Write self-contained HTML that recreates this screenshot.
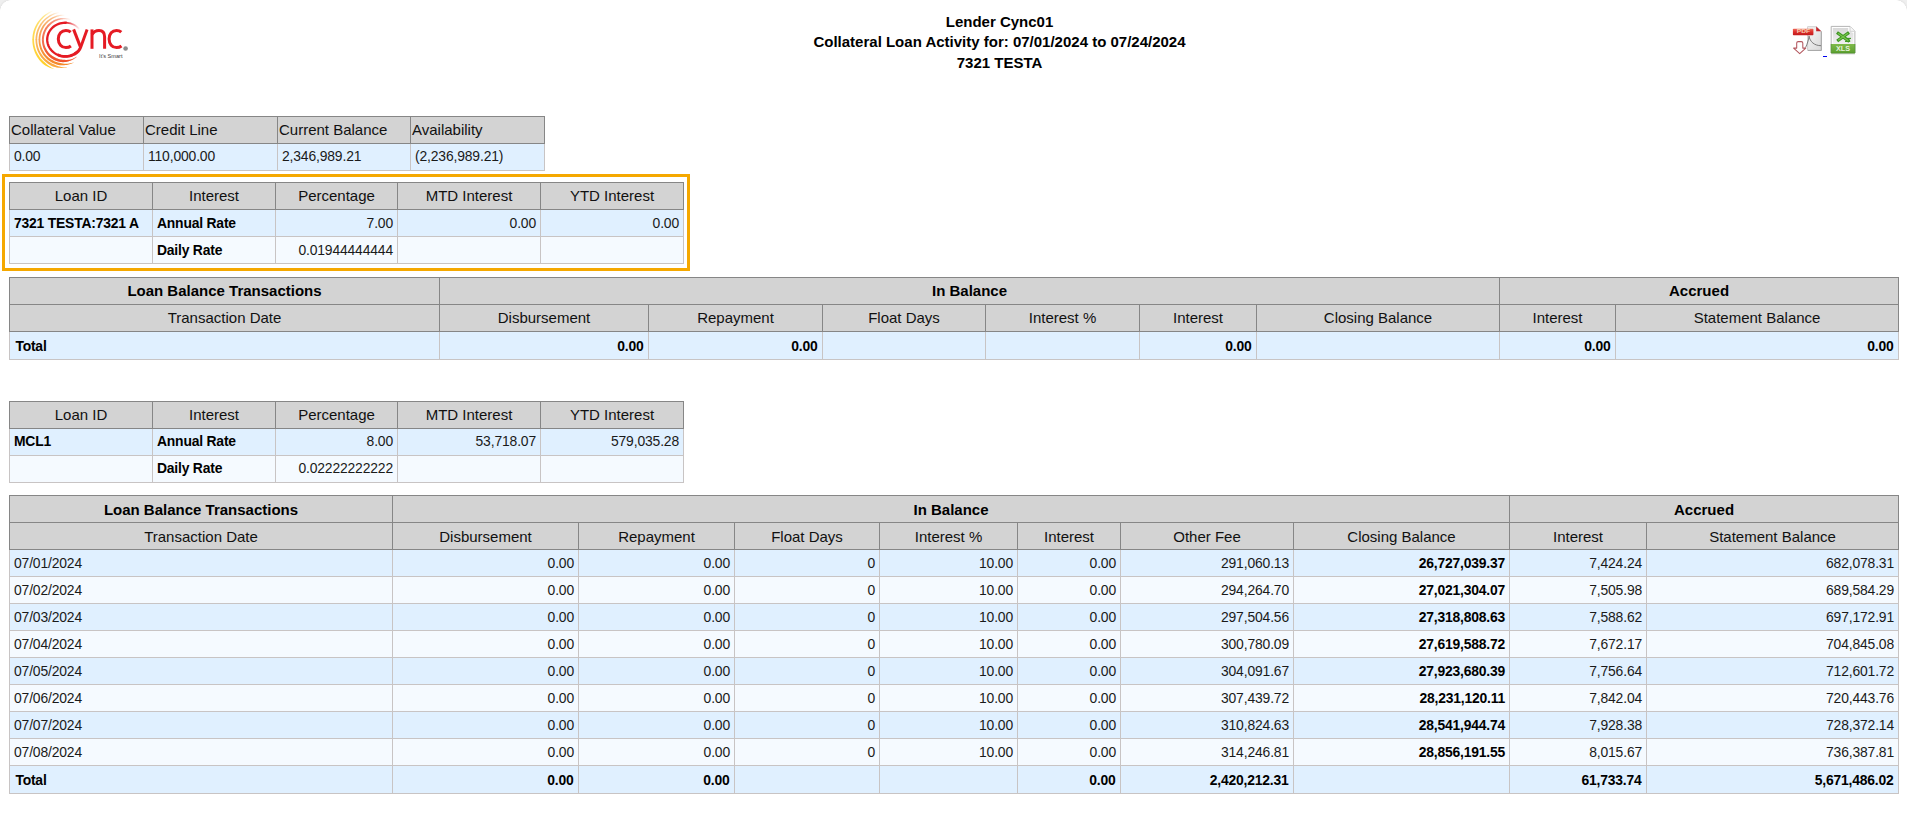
<!DOCTYPE html>
<html><head><meta charset="utf-8"><title>Collateral Loan Activity</title>
<style>
html,body{margin:0;padding:0;background:#fff;}
body{width:1907px;height:822px;position:relative;overflow:hidden;font-family:"Liberation Sans",sans-serif;color:#000;}
.t{position:absolute;border-collapse:collapse;table-layout:fixed;font-size:13.9px;}
.t th,.t td{box-sizing:border-box;padding:0 4px 0 4px;height:27px;white-space:nowrap;overflow:hidden;vertical-align:middle;}
.t th{padding-bottom:2px;background:#d3d3d3;border:1px solid #868686;font-weight:normal;font-size:15px;text-align:center;color:#111;}
.t th.b{font-weight:bold;color:#000;}
.t th.l{text-align:left;padding:0 1px 2px 1px;}
.t td{border:1px solid #c8c4c4;text-align:left;color:#1a1a1a;letter-spacing:-0.15px;}
.t td.p{padding-left:4px;padding-bottom:2px;}
.t td.r{text-align:right;}
.t td.b{font-weight:bold;color:#000;letter-spacing:-0.2px;}
.t tr.u td{padding-bottom:2px;}
.t tr.n th{padding-bottom:0;}
.t td.tl{padding-left:5.4px;}
.t tr.tot td.r{padding-right:4.5px;}
.t tr.a td{background:#e0f0ff;}
.t tr.e td{background:#f5faff;}
.t tr.tot td{height:28px;}
.hl{position:absolute;left:2px;top:174px;width:682px;height:91px;border:3px solid #f5a800;}
.ttl{position:absolute;left:700px;width:599px;text-align:center;font-weight:bold;font-size:15px;line-height:20px;color:#000;}
.cnr{position:absolute;top:0;width:11px;height:11px;}
.logo{position:absolute;left:25px;top:5px;}
.ico{position:absolute;}
</style></head>
<body>
<div class="cnr" style="left:0;background:radial-gradient(circle at 11px 11px,rgba(255,255,255,0) 10.5px,#e6e6e6 11px,#efefef 13px)"></div>
<div class="cnr" style="right:0;background:radial-gradient(circle at 0px 11px,rgba(255,255,255,0) 10.5px,#e6e6e6 11px,#efefef 13px)"></div>
<div class="ttl" style="top:12px">Lender Cync01</div>
<div class="ttl" style="top:32px">Collateral Loan Activity for: 07/01/2024 to 07/24/2024</div>
<div class="ttl" style="top:53px">7321 TESTA</div>
<svg class="ico" style="left:1789px;top:24px" width="36" height="33" viewBox="1789 24 36 33">
<defs>
<linearGradient id="pp" x1="0" y1="0" x2="1" y2="1"><stop offset="0" stop-color="#f7f7f7"/><stop offset="1" stop-color="#d9d9d9"/></linearGradient>
<linearGradient id="pr" x1="0" y1="0" x2="0" y2="1"><stop offset="0" stop-color="#ef6a58"/><stop offset=".5" stop-color="#dd2e2a"/><stop offset="1" stop-color="#bf1a1d"/></linearGradient>
</defs>
<path d="M1807.6 26.7 H1816.4 L1821.4 31.3 V50.5 H1807.6 Z" fill="url(#pp)" stroke="#c4c4c4" stroke-width=".8"/>
<path d="M1821.3 31.5 V50.4 H1808" fill="none" stroke="#a6a6a6" stroke-width="1"/>
<path d="M1816.2 26.5 L1821.2 31.2 H1816.2 Z" fill="#c5232a"/>
<path d="M1808.9 35.8 C1810 42 1814.5 45.6 1821 45.7" fill="none" stroke="#707070" stroke-width=".9"/>
<path d="M1805.6 47.6 C1807.2 44 1808.6 40 1809.1 36.2" fill="none" stroke="#707070" stroke-width=".9"/>
<rect x="1792.9" y="28.7" width="20.5" height="6.5" rx=".7" fill="url(#pr)"/>
<text x="1803.4" y="33.4" text-anchor="middle" font-family="Liberation Sans, sans-serif" font-weight="bold" font-size="5" fill="#f6cdb0" textLength="13.4" lengthAdjust="spacingAndGlyphs">PDF</text>
<path d="M1796.7 48.1 V43 Q1796.7 41.6 1798.2 41.6 H1801.3 Q1802.8 41.6 1802.8 43 V48.1 H1805.8 L1799.7 53.6 L1793.6 48.1 Z" fill="#fff" stroke="#b4585f" stroke-width="1.05" stroke-linejoin="round"/>
</svg>
<div style="position:absolute;left:1823px;top:56px;width:4px;height:1px;background:#0000ee"></div>
<svg class="ico" style="left:1829px;top:24px" width="28" height="32" viewBox="1829 24 28 32">
<defs>
<linearGradient id="xp" x1="0" y1="0" x2="0" y2="1"><stop offset="0" stop-color="#e9e9e9"/><stop offset="1" stop-color="#ffffff"/></linearGradient>
<linearGradient id="xi" x1="0" y1="0" x2="0" y2="1"><stop offset="0" stop-color="#d8d8d8"/><stop offset="1" stop-color="#f1f1f1"/></linearGradient>
<linearGradient id="xg" x1="0" y1="0" x2="0" y2="1"><stop offset="0" stop-color="#7fba4a"/><stop offset="1" stop-color="#5c9f30"/></linearGradient>
</defs>
<path d="M1831.3 53.9 H1855" stroke="#d0d0d0" stroke-width="1"/>
<path d="M1831.2 26.4 H1850 L1854.9 31.3 V53 H1831.2 Z" fill="#fff" stroke="#b4b4b4" stroke-width="1"/>
<path d="M1832.8 28 H1848.2 V31 L1853.4 33 V44 H1832.8 Z" fill="url(#xi)"/>
<path d="M1850 26.6 V31.3 H1854.7" fill="#f7f7f7" stroke="#c6c6c6" stroke-width=".8"/>
<rect x="1831.2" y="44" width="23.7" height="9" fill="url(#xg)"/>
<path d="M1831.2 44 V53 H1854.9 V44" fill="none" stroke="#4f942a" stroke-width=".8"/>
<text x="1843.1" y="51.1" text-anchor="middle" font-family="Liberation Sans, sans-serif" font-weight="bold" font-size="6.7" fill="#e6f3da" textLength="14.2" lengthAdjust="spacingAndGlyphs">XLS</text>
<g fill="none" stroke="#3c9420" stroke-linecap="butt">
<path d="M1837 32.5 L1849.4 41.4" stroke-width="3.3"/><path d="M1849 32.5 L1837.2 41" stroke-width="3.3"/><path d="M1846.3 38.4 H1851" stroke-width="1.1"/><path d="M1845 41.4 H1850.2" stroke-width="1.1"/>
</g>
<g fill="none" stroke="#78c44e" stroke-width="1.3">
<path d="M1838 33.2 L1848.4 40.7"/><path d="M1848 33.2 L1838.2 40.3"/>
</g>
</svg>
<svg class="logo" width="110" height="70" viewBox="25 5 110 70"><defs><linearGradient id="g0" gradientUnits="userSpaceOnUse" x1="42.9" y1="0" x2="71.0" y2="0"><stop offset="0" stop-color="#f0542c" stop-opacity=".82"/><stop offset=".55" stop-color="#f0542c" stop-opacity=".55"/><stop offset="1" stop-color="#f0542c" stop-opacity="0"/></linearGradient><linearGradient id="l0" gradientUnits="userSpaceOnUse" x1="0" y1="39.8" x2="0" y2="56.8"><stop offset="0" stop-color="#f0542c" stop-opacity=".82"/><stop offset="1" stop-color="#f0542c" stop-opacity="1"/></linearGradient><linearGradient id="g1" gradientUnits="userSpaceOnUse" x1="39.4" y1="0" x2="65.0" y2="0"><stop offset="0" stop-color="#f58a2b" stop-opacity=".82"/><stop offset=".55" stop-color="#f58a2b" stop-opacity=".55"/><stop offset="1" stop-color="#f58a2b" stop-opacity="0"/></linearGradient><linearGradient id="l1" gradientUnits="userSpaceOnUse" x1="0" y1="39.8" x2="0" y2="59.5"><stop offset="0" stop-color="#f58a2b" stop-opacity=".82"/><stop offset="1" stop-color="#f58a2b" stop-opacity="1"/></linearGradient><linearGradient id="g2" gradientUnits="userSpaceOnUse" x1="36.3" y1="0" x2="59.3" y2="0"><stop offset="0" stop-color="#f9a83f" stop-opacity=".82"/><stop offset=".55" stop-color="#f9a83f" stop-opacity=".55"/><stop offset="1" stop-color="#f9a83f" stop-opacity="0"/></linearGradient><linearGradient id="l2" gradientUnits="userSpaceOnUse" x1="0" y1="39.8" x2="0" y2="62.0"><stop offset="0" stop-color="#f9a83f" stop-opacity=".82"/><stop offset="1" stop-color="#f9a83f" stop-opacity="1"/></linearGradient><linearGradient id="g3" gradientUnits="userSpaceOnUse" x1="33.2" y1="0" x2="53.0" y2="0"><stop offset="0" stop-color="#ffd028" stop-opacity=".82"/><stop offset=".55" stop-color="#ffd028" stop-opacity=".55"/><stop offset="1" stop-color="#ffd028" stop-opacity="0"/></linearGradient><linearGradient id="l3" gradientUnits="userSpaceOnUse" x1="0" y1="39.8" x2="0" y2="64.5"><stop offset="0" stop-color="#ffd028" stop-opacity=".82"/><stop offset="1" stop-color="#ffd028" stop-opacity="1"/></linearGradient><linearGradient id="gr" gradientUnits="userSpaceOnUse" x1="66" y1="0" x2="80" y2="0"><stop offset="0" stop-color="#e51b24" stop-opacity="1"/><stop offset="1" stop-color="#e51b24" stop-opacity="0"/></linearGradient></defs>
<path d="M41.90 39.80 L41.93 38.63 L42.02 37.46 L42.18 36.30 L42.39 35.14 L42.67 34.00 L43.01 32.88 L43.40 31.77 L43.85 30.69 L44.36 29.64 L44.93 28.61 L45.55 27.61 L46.22 26.65 L46.94 25.72 L47.71 24.84 L48.54 24.01 L49.41 23.22 L50.32 22.49 L51.26 21.80 L52.24 21.16 L53.25 20.58 L54.29 20.05 L55.35 19.58 L56.44 19.17 L57.55 18.81 L58.67 18.51 L59.81 18.27 L60.95 18.10 L62.11 17.98 L63.26 17.93 L64.42 17.93 L65.57 18.00 L66.72 18.13 L67.86 18.32 L68.98 18.56 L70.09 18.87 L71.18 19.23 L70.82 20.28 L69.78 19.97 L68.72 19.71 L67.65 19.52 L66.57 19.38 L65.48 19.30 L64.40 19.27 L63.31 19.31 L62.24 19.40 L61.16 19.54 L60.10 19.74 L59.05 20.00 L58.02 20.32 L57.01 20.68 L56.01 21.10 L55.05 21.57 L54.11 22.10 L53.20 22.67 L52.32 23.28 L51.47 23.94 L50.67 24.65 L49.90 25.39 L49.17 26.18 L48.48 26.99 L47.83 27.83 L47.22 28.71 L46.66 29.62 L46.14 30.55 L45.68 31.51 L45.27 32.50 L44.91 33.50 L44.60 34.52 L44.35 35.56 L44.15 36.61 L44.01 37.67 L43.93 38.73 L43.90 39.80Z" fill="url(#g0)"/><path d="M41.90 39.41 L41.91 40.57 L41.98 41.73 L42.12 42.89 L42.30 44.04 L42.53 45.18 L42.83 46.30 L43.18 47.41 L43.59 48.51 L44.06 49.58 L44.58 50.62 L45.15 51.64 L45.78 52.62 L46.47 53.58 L47.20 54.49 L47.98 55.37 L48.80 56.21 L49.67 57.00 L50.58 57.75 L51.52 58.45 L52.51 59.10 L53.52 59.69 L54.57 60.24 L55.66 60.69 L56.77 61.09 L57.90 61.42 L59.04 61.70 L60.20 61.91 L61.37 62.07 L62.54 62.16 L63.71 62.19 L64.88 62.11 L66.04 61.93 L67.18 61.70 L68.30 61.41 L69.40 61.07 L70.48 60.67 L71.53 60.22 L72.56 59.72 L73.55 59.18 L74.51 58.58 L75.44 57.95 L76.33 57.27 L77.18 56.55 L77.12 56.47 L76.19 57.06 L75.23 57.61 L74.24 58.10 L73.24 58.53 L72.21 58.91 L71.17 59.22 L70.12 59.48 L69.06 59.68 L67.99 59.81 L66.92 59.89 L65.86 59.91 L64.80 59.87 L63.75 59.80 L62.71 59.73 L61.67 59.62 L60.64 59.44 L59.62 59.22 L58.61 58.94 L57.63 58.60 L56.66 58.22 L55.71 57.79 L54.77 57.34 L53.86 56.85 L52.97 56.30 L52.11 55.71 L51.28 55.08 L50.48 54.40 L49.72 53.68 L49.00 52.92 L48.32 52.13 L47.68 51.29 L47.09 50.43 L46.54 49.53 L46.04 48.61 L45.58 47.66 L45.18 46.69 L44.83 45.69 L44.52 44.68 L44.28 43.65 L44.10 42.61 L43.98 41.56 L43.91 40.50 L43.90 39.45Z" fill="url(#l0)"/><path d="M38.55 39.80 L38.59 38.43 L38.70 37.07 L38.88 35.72 L39.13 34.37 L39.46 33.04 L39.86 31.74 L40.32 30.45 L40.86 29.19 L41.46 27.96 L42.12 26.77 L42.85 25.61 L43.65 24.50 L44.52 23.45 L45.44 22.44 L46.41 21.48 L47.43 20.58 L48.49 19.73 L49.60 18.94 L50.75 18.21 L51.93 17.55 L53.15 16.95 L54.40 16.42 L55.67 15.95 L56.96 15.55 L58.28 15.23 L59.60 14.97 L60.94 14.79 L62.28 14.68 L63.63 14.64 L64.98 14.67 L64.94 15.66 L63.65 15.67 L62.36 15.75 L61.08 15.90 L59.81 16.12 L58.55 16.40 L57.32 16.75 L56.10 17.17 L54.91 17.65 L53.75 18.19 L52.62 18.80 L51.52 19.46 L50.46 20.18 L49.45 20.95 L48.47 21.78 L47.55 22.66 L46.67 23.58 L45.84 24.55 L45.07 25.56 L44.35 26.61 L43.67 27.69 L43.05 28.80 L42.49 29.94 L42.00 31.11 L41.56 32.30 L41.20 33.52 L40.89 34.75 L40.66 36.00 L40.49 37.26 L40.38 38.53 L40.35 39.80Z" fill="url(#g1)"/><path d="M38.55 39.35 L38.57 40.70 L38.65 42.05 L38.80 43.39 L39.02 44.72 L39.30 46.04 L39.65 47.35 L40.06 48.64 L40.55 49.90 L41.10 51.14 L41.71 52.34 L42.39 53.52 L43.13 54.65 L43.93 55.75 L44.79 56.80 L45.70 57.81 L46.67 58.77 L47.68 59.68 L48.74 60.53 L49.85 61.33 L51.00 62.07 L52.18 62.74 L53.41 63.35 L54.67 63.86 L55.96 64.31 L57.27 64.69 L58.60 65.00 L59.94 65.22 L61.30 65.29 L62.66 65.30 L64.01 65.23 L65.34 65.10 L66.67 64.90 L67.97 64.63 L69.26 64.30 L70.52 63.91 L71.76 63.45 L72.97 62.94 L74.15 62.36 L74.11 62.28 L72.88 62.70 L71.63 63.05 L70.37 63.33 L69.10 63.54 L67.83 63.68 L66.55 63.74 L65.28 63.74 L64.01 63.67 L62.76 63.52 L61.52 63.31 L60.30 63.03 L59.09 62.77 L57.88 62.45 L56.70 62.08 L55.54 61.64 L54.41 61.14 L53.29 60.61 L52.20 60.02 L51.14 59.38 L50.11 58.69 L49.12 57.93 L48.18 57.13 L47.27 56.28 L46.41 55.38 L45.60 54.43 L44.84 53.45 L44.13 52.42 L43.48 51.36 L42.88 50.26 L42.34 49.13 L41.86 47.97 L41.45 46.79 L41.09 45.59 L40.80 44.37 L40.59 43.14 L40.44 41.89 L40.36 40.64 L40.35 39.39Z" fill="url(#l1)"/><path d="M35.47 39.80 L35.52 38.26 L35.64 36.73 L35.85 35.21 L36.13 33.70 L36.50 32.21 L36.95 30.74 L37.47 29.29 L38.08 27.88 L38.75 26.50 L39.51 25.16 L40.35 23.87 L41.26 22.64 L42.23 21.45 L43.27 20.32 L44.36 19.25 L45.51 18.24 L46.71 17.29 L47.95 16.41 L49.24 15.59 L50.58 14.85 L51.95 14.19 L53.35 13.59 L54.78 13.08 L56.23 12.64 L57.71 12.28 L59.20 12.00 L59.36 12.95 L57.94 13.26 L56.53 13.65 L55.14 14.12 L53.79 14.66 L52.46 15.27 L51.17 15.95 L49.93 16.70 L48.72 17.52 L47.56 18.39 L46.45 19.33 L45.39 20.33 L44.39 21.37 L43.45 22.47 L42.57 23.62 L41.75 24.81 L41.00 26.05 L40.30 27.31 L39.67 28.61 L39.10 29.93 L38.61 31.29 L38.19 32.67 L37.84 34.07 L37.57 35.49 L37.38 36.92 L37.26 38.36 L37.22 39.80Z" fill="url(#g2)"/><path d="M35.48 39.30 L35.49 40.81 L35.59 42.33 L35.76 43.83 L36.01 45.32 L36.32 46.81 L36.72 48.27 L37.19 49.71 L37.73 51.13 L38.35 52.51 L39.05 53.87 L39.81 55.18 L40.64 56.45 L41.54 57.68 L42.51 58.86 L43.54 59.99 L44.62 61.06 L45.76 62.07 L46.95 63.02 L48.20 63.91 L49.49 64.73 L50.82 65.49 L52.19 66.16 L53.62 66.70 L55.10 67.09 L56.59 67.40 L58.09 67.64 L59.59 67.80 L61.09 67.88 L62.58 67.88 L64.07 67.81 L65.55 67.67 L67.01 67.45 L67.00 67.35 L65.53 67.36 L64.07 67.29 L62.62 67.14 L61.19 66.91 L59.78 66.60 L58.40 66.21 L57.04 65.75 L55.72 65.22 L54.43 64.62 L53.16 64.02 L51.89 63.41 L50.65 62.75 L49.45 62.02 L48.28 61.23 L47.16 60.37 L46.08 59.46 L45.06 58.49 L44.08 57.47 L43.16 56.40 L42.30 55.28 L41.50 54.11 L40.76 52.90 L40.08 51.66 L39.48 50.38 L38.93 49.07 L38.46 47.73 L38.06 46.37 L37.74 44.98 L37.49 43.58 L37.33 42.17 L37.24 40.75 L37.23 39.33Z" fill="url(#l2)"/><path d="M32.32 39.80 L32.37 38.14 L32.50 36.48 L32.72 34.83 L33.02 33.19 L33.41 31.58 L33.88 29.98 L34.44 28.41 L35.07 26.88 L35.80 25.38 L36.61 23.93 L37.51 22.53 L38.47 21.18 L39.50 19.88 L40.60 18.64 L41.76 17.46 L42.97 16.34 L44.25 15.28 L45.57 14.30 L46.95 13.39 L48.37 12.55 L49.83 11.79 L51.32 11.11 L52.85 10.50 L53.20 11.40 L51.74 12.04 L50.32 12.75 L48.93 13.53 L47.59 14.38 L46.30 15.30 L45.06 16.29 L43.87 17.34 L42.75 18.45 L41.68 19.61 L40.67 20.83 L39.73 22.10 L38.86 23.41 L38.06 24.77 L37.34 26.16 L36.67 27.59 L36.07 29.04 L35.54 30.52 L35.10 32.03 L34.73 33.56 L34.44 35.10 L34.24 36.66 L34.12 38.23 L34.07 39.80Z" fill="url(#g3)"/><path d="M32.33 39.25 L32.35 40.93 L32.45 42.62 L32.64 44.29 L32.92 45.95 L33.27 47.60 L33.72 49.23 L34.24 50.84 L34.86 52.41 L35.55 53.96 L36.33 55.46 L37.18 56.92 L38.12 58.33 L39.12 59.70 L40.20 61.01 L41.35 62.26 L42.56 63.44 L43.84 64.56 L45.26 65.50 L46.73 66.34 L48.23 67.10 L49.77 67.78 L51.34 68.35 L52.93 68.84 L54.53 69.24 L54.57 69.13 L53.08 68.44 L51.64 67.67 L50.25 66.83 L48.91 65.93 L47.63 64.96 L46.40 63.94 L45.23 62.87 L44.02 61.84 L42.87 60.76 L41.77 59.61 L40.74 58.41 L39.77 57.15 L38.87 55.85 L38.04 54.49 L37.28 53.10 L36.60 51.66 L35.99 50.19 L35.46 48.69 L35.02 47.16 L34.65 45.61 L34.38 44.04 L34.19 42.46 L34.09 40.87 L34.08 39.28Z" fill="url(#l3)"/>
<path d="M65.93 22.71 L67.51 22.83 L69.06 23.07 L70.59 23.44 L72.08 23.93 L73.52 24.54 L74.89 25.26 L76.19 26.09 L77.41 27.03 L78.54 28.06 L79.56 29.18" fill="none" stroke="url(#gr)" stroke-width="1.7"/><path d="M74.35 54.14 L72.92 54.83 L71.43 55.40 L69.90 55.85 L68.32 56.16 L66.73 56.35 L65.12 56.40 L63.51 56.32 L61.92 56.10 L60.35 55.76 L58.83 55.29 L57.35 54.69 L55.94 53.97 L54.60 53.14 L53.35 52.20 L52.19 51.16 L51.13 50.03 L50.19 48.82 L49.36 47.53 L48.66 46.19 L48.10 44.78 L47.66 43.34 L47.37 41.87 L47.22 40.38 L47.21 38.88 L47.35 37.39 L47.63 35.91 L48.04 34.46 L48.60 33.06 L49.28 31.70 L50.10 30.41 L51.03 29.19 L52.07 28.05 L53.22 27.00 L54.47 26.05 L55.80 25.21 L57.20 24.48 L58.67 23.87 L60.20 23.38 L61.76 23.03 L63.35 22.80 L64.95 22.70 L66.56 22.74" fill="none" stroke="#e51b24" stroke-width="2.3"/><path d="M75.68 53.35 L74.35 54.14 L72.95 54.82 L71.49 55.38 L69.98 55.83 L68.44 56.14 L66.88 56.34 L65.30 56.40 L63.72 56.34 L62.16 56.14 L60.62 55.83 L59.11 55.38 L57.65 54.82" fill="none" stroke="#e51b24" stroke-width="2.7"/><path d="M87.1 29.4 L80.6 47.4 C79.6 50.2 77.0 52.7 74.35 54.14" fill="none" stroke="#e51b24" stroke-width="2.9" stroke-linejoin="round"/>
<g fill="none" stroke="#e51b24" stroke-width="3">
<path d="M70.7 32.2 C69.4 31.0 67.7 30.4 65.9 30.4 C61.6 30.4 58.3 34.0 58.3 39.0 C58.3 44.0 61.6 47.6 65.9 47.6 C67.8 47.6 69.5 47.1 70.9 46.0"/>
<path d="M73.6 29.4 L80.7 47.6"/>
<path d="M92 29.4 L92 48.8"/>
<path d="M92 34.6 C93.5 31.9 96.2 30.45 99 30.45 C102.8 30.45 104.6 32.9 104.6 36.8 L104.6 48.8"/>
<path d="M121.3 32.2 C120 31.0 118.3 30.4 116.5 30.4 C112.2 30.4 109.1 34.0 109.1 39.0 C109.1 44.0 112.2 47.6 116.5 47.6 C118.4 47.6 120.1 47.1 121.5 46.0"/>
</g>
<circle cx="125.6" cy="48.5" r="2.3" fill="#8c8c8c"/>
<text x="99.1" y="57.7" font-family="Liberation Sans, sans-serif" font-size="5.4" fill="#3a3a3a" textLength="23.4" lengthAdjust="spacingAndGlyphs">It's Smart</text>
</svg>
<table class="t" style="left:9px;top:116px;width:536px"><colgroup><col style="width:134px"><col style="width:134px"><col style="width:133px"><col style="width:134px"></colgroup>
<tr class="h"><th class="l">Collateral Value</th><th class="l">Credit Line</th><th class="l">Current Balance</th><th class="l">Availability</th></tr>
<tr class="a"><td class="p">0.00</td><td class="p">110,000.00</td><td class="p">2,346,989.21</td><td class="p">(2,236,989.21)</td></tr>
</table>
<div class="hl"></div>
<table class="t" style="left:9px;top:182px;width:675px"><colgroup><col style="width:143px"><col style="width:123px"><col style="width:122px"><col style="width:143px"><col style="width:143px"></colgroup>
<tr class="h"><th>Loan ID</th><th>Interest</th><th>Percentage</th><th>MTD Interest</th><th>YTD Interest</th></tr>
<tr class="a"><td class="b">7321 TESTA:7321 A</td><td class="b">Annual Rate</td><td class="r">7.00</td><td class="r">0.00</td><td class="r">0.00</td></tr>
<tr class="e"><td></td><td class="b">Daily Rate</td><td class="r">0.01944444444</td><td></td><td></td></tr>
</table>
<table class="t" style="left:9px;top:277px;width:1890px"><colgroup><col style="width:430px"><col style="width:209px"><col style="width:174px"><col style="width:163px"><col style="width:154px"><col style="width:117px"><col style="width:243px"><col style="width:116px"><col style="width:283px"></colgroup>
<tr class="h"><th class="b">Loan Balance Transactions</th><th class="b" colspan="6">In Balance</th><th class="b" colspan="2">Accrued</th></tr>
<tr class="h"><th>Transaction Date</th><th>Disbursement</th><th>Repayment</th><th>Float Days</th><th>Interest %</th><th>Interest</th><th>Closing Balance</th><th>Interest</th><th>Statement Balance</th></tr>
<tr class="a tot"><td class="b tl">Total</td><td class="r b">0.00</td><td class="r b">0.00</td><td></td><td></td><td class="r b">0.00</td><td></td><td class="r b">0.00</td><td class="r b">0.00</td></tr>
</table>
<table class="t" style="left:9px;top:401px;width:675px"><colgroup><col style="width:143px"><col style="width:123px"><col style="width:122px"><col style="width:143px"><col style="width:143px"></colgroup>
<tr class="h"><th>Loan ID</th><th>Interest</th><th>Percentage</th><th>MTD Interest</th><th>YTD Interest</th></tr>
<tr class="a u"><td class="b">MCL1</td><td class="b">Annual Rate</td><td class="r">8.00</td><td class="r">53,718.07</td><td class="r">579,035.28</td></tr>
<tr class="e u"><td></td><td class="b">Daily Rate</td><td class="r">0.02222222222</td><td></td><td></td></tr>
</table>
<table class="t" style="left:9px;top:495px;width:1890px"><colgroup><col style="width:383px"><col style="width:186px"><col style="width:156px"><col style="width:145px"><col style="width:138px"><col style="width:103px"><col style="width:173px"><col style="width:216px"><col style="width:137px"><col style="width:252px"></colgroup>
<tr class="h n"><th class="b">Loan Balance Transactions</th><th class="b" colspan="7">In Balance</th><th class="b" colspan="2">Accrued</th></tr>
<tr class="h n"><th>Transaction Date</th><th>Disbursement</th><th>Repayment</th><th>Float Days</th><th>Interest %</th><th>Interest</th><th>Other Fee</th><th>Closing Balance</th><th>Interest</th><th>Statement Balance</th></tr>
<tr class="a"><td>07/01/2024</td><td class="r">0.00</td><td class="r">0.00</td><td class="r">0</td><td class="r">10.00</td><td class="r">0.00</td><td class="r">291,060.13</td><td class="r b">26,727,039.37</td><td class="r">7,424.24</td><td class="r">682,078.31</td></tr>
<tr class="e"><td>07/02/2024</td><td class="r">0.00</td><td class="r">0.00</td><td class="r">0</td><td class="r">10.00</td><td class="r">0.00</td><td class="r">294,264.70</td><td class="r b">27,021,304.07</td><td class="r">7,505.98</td><td class="r">689,584.29</td></tr>
<tr class="a"><td>07/03/2024</td><td class="r">0.00</td><td class="r">0.00</td><td class="r">0</td><td class="r">10.00</td><td class="r">0.00</td><td class="r">297,504.56</td><td class="r b">27,318,808.63</td><td class="r">7,588.62</td><td class="r">697,172.91</td></tr>
<tr class="e"><td>07/04/2024</td><td class="r">0.00</td><td class="r">0.00</td><td class="r">0</td><td class="r">10.00</td><td class="r">0.00</td><td class="r">300,780.09</td><td class="r b">27,619,588.72</td><td class="r">7,672.17</td><td class="r">704,845.08</td></tr>
<tr class="a"><td>07/05/2024</td><td class="r">0.00</td><td class="r">0.00</td><td class="r">0</td><td class="r">10.00</td><td class="r">0.00</td><td class="r">304,091.67</td><td class="r b">27,923,680.39</td><td class="r">7,756.64</td><td class="r">712,601.72</td></tr>
<tr class="e"><td>07/06/2024</td><td class="r">0.00</td><td class="r">0.00</td><td class="r">0</td><td class="r">10.00</td><td class="r">0.00</td><td class="r">307,439.72</td><td class="r b">28,231,120.11</td><td class="r">7,842.04</td><td class="r">720,443.76</td></tr>
<tr class="a"><td>07/07/2024</td><td class="r">0.00</td><td class="r">0.00</td><td class="r">0</td><td class="r">10.00</td><td class="r">0.00</td><td class="r">310,824.63</td><td class="r b">28,541,944.74</td><td class="r">7,928.38</td><td class="r">728,372.14</td></tr>
<tr class="e"><td>07/08/2024</td><td class="r">0.00</td><td class="r">0.00</td><td class="r">0</td><td class="r">10.00</td><td class="r">0.00</td><td class="r">314,246.81</td><td class="r b">28,856,191.55</td><td class="r">8,015.67</td><td class="r">736,387.81</td></tr>
<tr class="a tot"><td class="b tl">Total</td><td class="r b">0.00</td><td class="r b">0.00</td><td></td><td></td><td class="r b">0.00</td><td class="r b">2,420,212.31</td><td></td><td class="r b">61,733.74</td><td class="r b">5,671,486.02</td></tr>
</table>
</body></html>
